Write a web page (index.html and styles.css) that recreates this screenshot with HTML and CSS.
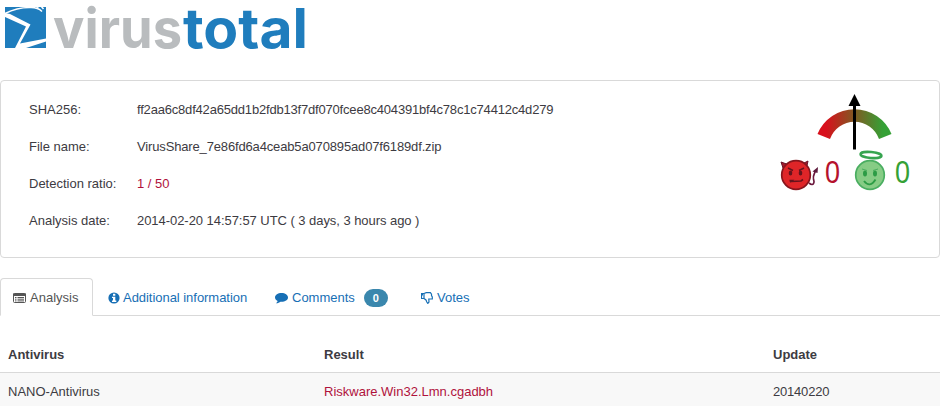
FILE: index.html
```html
<!DOCTYPE html>
<html lang="en">
<head>
<meta charset="utf-8">
<title>VirusTotal</title>
<link rel="stylesheet" href="styles.css">
</head>
<body>
<div class="page">
  <header class="header">
    <svg class="logo" width="310" height="60" viewBox="0 0 310 60" role="img" aria-label="virustotal">
      <rect x="5" y="7" width="41" height="41" fill="#1f7dbd"/>
      <path d="M5 13.500Q18 7 31 7.500Q38 7.500 42 11.500" fill="none" stroke="#fff" stroke-width="1.500"/>
      <path d="M35 6L38.500 7.500M41 6L43.500 9" stroke="#fff" stroke-width="1.500"/>
      <path d="M5 13L10 14L30.500 24.500L20 43.500L46 38.500V41.500L26 48H15L26 26.500L5 17Z" fill="#fff"/>
      <text class="word" x="53" y="48" textLength="129" lengthAdjust="spacingAndGlyphs" fill="#b9bcbe">virus</text>
      <text class="word" x="183" y="48" textLength="125" lengthAdjust="spacingAndGlyphs" fill="#1f7dbd">total</text>
    </svg>
  </header>
  <section class="summary">
    <dl class="facts">
      <dt>SHA256:</dt><dd><span class="hash">ff2aa6c8df42a65dd1b2fdb13f7df070fcee8c404391bf4c78c1c74412c4d279</span></dd>
      <dt>File name:</dt><dd><span class="file">VirusShare_7e86fd6a4ceab5a070895ad07f6189df.zip</span></dd>
      <dt>Detection ratio:</dt><dd class="red">1 / 50</dd>
      <dt>Analysis date:</dt><dd><span class="date">2014-02-20 14:57:57 UTC ( 3 days, 3 hours ago )</span></dd>
    </dl>
    <div class="rating">
      <svg width="140" height="104" viewBox="775 90 140 104">
        <defs><linearGradient id="scale" gradientUnits="userSpaceOnUse" x1="826" y1="0" x2="883" y2="0"><stop offset="0" stop-color="#d8101c"/><stop offset=".5" stop-color="#805a22"/><stop offset="1" stop-color="#35a136"/></linearGradient></defs>
        <path d="M817.500 134A40 40 0 0 1 891.500 134L879 139A26 26 0 0 0 830 139Z" fill="url(#scale)"/>
        <path d="M854.500 149.500V104" stroke="#000" stroke-width="3"/>
        <path d="M854.500 94L860.500 106H848.500Z"/>
        <path d="M783 168L781 162L788 164.500M801 164.500L808 161L806.500 168" fill="#a51b2b" stroke="#68142a"/>
        <circle cx="796" cy="175" r="14.300" fill="#df2528" stroke="#87151d" stroke-width="1.700"/>
        <path d="M788 168L793 170.500M799 170.500L804 168M789.500 180.500L792 180.500L790 182M791 181.500L801 181L803 179.500" fill="none" stroke="#65131c" stroke-width="1.600"/>
        <ellipse cx="790.500" cy="173" rx="1.800" ry="2.600" fill="#65131c"/><ellipse cx="800.500" cy="173" rx="1.800" ry="2.600" fill="#65131c"/>
        <path d="M809 183C814 187 814.500 182 813.500 179C812.500 175 815 174 815.500 170" fill="none" stroke="#6b173c" stroke-width="1.700"/>
        <path d="M818 167L812.500 171.500L817.500 173Z" fill="#5d193c"/>
        <text class="score" x="825" y="183" textLength="15" lengthAdjust="spacingAndGlyphs" fill="#b5122d">0</text>
        <circle cx="870" cy="175" r="14.300" fill="#86cc85" stroke="#4aae61" stroke-width="1.700"/>
        <ellipse cx="871" cy="155" rx="10.500" ry="3" fill="none" stroke="#36a44f" stroke-width="2.600" transform="rotate(5 871 155)"/>
        <path d="M862 169L867 170.500M873 170.500L878 169" fill="none" stroke="#4bae5f"/>
        <ellipse cx="865" cy="173.500" rx="2" ry="3" fill="#2c9c45"/><ellipse cx="875" cy="173.500" rx="2" ry="3" fill="#2c9c45"/>
        <path d="M864 181Q870 188.500 875.500 179.500" fill="none" stroke="#2c9c45" stroke-width="1.900"/>
        <text class="score" x="895" y="183" textLength="15" lengthAdjust="spacingAndGlyphs" fill="#35a136">0</text>
      </svg>
    </div>
  </section>
  <nav class="tabs">
    <a class="tab active"><svg class="icon" width="13" height="12" viewBox="0 0 13 12"><rect x=".5" y="1.500" width="12" height="9" rx="1" fill="#fff" stroke="currentColor"/><path d="M0 1.500H13V4H0Z" fill="currentColor"/><path d="M2 5.500H3.500M4.500 5.500H11M2 7.200H3.500M4.500 7.200H11M2 8.900H3.500M4.500 8.900H11" stroke="currentColor"/></svg><span>Analysis</span></a>
    <a class="tab info"><svg class="icon" width="12" height="12" viewBox="0 0 12 12"><circle cx="6" cy="6" r="5.600" fill="currentColor"/><path d="M5 1.700H7.300V3.700H5ZM4 4.700H7.300V8.600H8.300V10H4V8.600H5V6H4Z" fill="#fff"/></svg><span>Additional information</span></a>
    <a class="tab comments"><svg class="icon" width="13" height="12" viewBox="0 0 13 12"><path d="M6.500 1C2.900 1 0 2.900 0 5.500C0 7 1 8.200 2.600 9C2.400 10 1.700 10.800 1 11.300C3 11.200 4.500 10.500 5.500 9.700C9.700 10 13 8.300 13 5.500C13 2.900 10.100 1 6.500 1Z" fill="currentColor"/></svg><span>Comments</span><b class="badge">0</b></a>
    <a class="tab votes"><svg class="icon" width="12" height="12" viewBox="0 0 12 12"><path d="M.5 1.500H3V6.500H.5ZM3 1.500L5.200 .7H9.400L10.500 2.200V3.500L11.300 5V7H7.800L8 10L6.800 11.400L5.800 10L5 8L3 6.500" fill="none" stroke="currentColor" stroke-width="1.200"/><path d="M.5 1.500H2V3.500H.5Z" fill="currentColor"/></svg><span>Votes</span></a>
  </nav>
  <table class="results">
    <colgroup><col class="c1"><col class="c2"><col></colgroup>
    <thead><tr><th>Antivirus</th><th>Result</th><th>Update</th></tr></thead>
    <tbody><tr><td>NANO-Antivirus</td><td class="red">Riskware.Win32.Lmn.cgadbh</td><td class="update">20140220</td></tr></tbody>
  </table>
</div>
</body>
</html>
```
FILE: styles.css
```css
* { box-sizing: border-box; }
body { margin: 0; background: #fff; color: #3d3b42; font: 13px/18px "Liberation Sans", Arial, sans-serif; overflow: hidden; }
.page { width: 940px; }
.header { height: 80px; }
.logo { display: block; overflow: visible; }
.word { font: 700 55px/1 Inter, sans-serif; }
.summary { height: 178px; border: 1px solid #d9d9d9; border-radius: 4px; padding: 10px 24px 0 28px; display: flex; justify-content: space-between; }
.facts { margin: 0; display: grid; grid-template-columns: 108px auto; grid-auto-rows: 37px; line-height: 37px; white-space: nowrap; align-content: start; }
.facts dd { margin: 0; }
.hash { letter-spacing: -.19px; }
.file { letter-spacing: -.15px; }
.date { letter-spacing: -.05px; }
.red { color: #b0123c; }
.rating svg { display: block; margin-top: -1px; }
.score { font: 31px "Liberation Sans", Arial, sans-serif; }
.tabs { display: flex; height: 38px; margin-top: 20px; border-bottom: 1px solid #d9d9d9; color: #176fb5; }
.tab { display: flex; align-items: center; height: 37px; padding-top: 2px; white-space: nowrap; }
.tab.active { width: 93px; height: 38px; padding: 1px 0 0 12px; border: 1px solid #d9d9d9; border-bottom-color: #fff; border-radius: 4px 4px 0 0; color: #555; background: #fff; }
.icon { flex: none; margin-right: 4px; }
.info { width: 182px; padding-left: 15px; letter-spacing: -.04px; }
.info .icon { margin-right: 3px; }
.comments { width: 146px; }
.badge { width: 24px; height: 18px; margin-left: 9px; border-radius: 9px; background: #3a87ad; color: #fff; font-size: 11px; text-align: center; }
.results { width: 940px; margin-top: 20px; border-collapse: separate; border-spacing: 0; table-layout: fixed; }
.c1 { width: 316px; }
.c2 { width: 449px; }
.results th { height: 37px; padding: 1px 8px 0; text-align: left; border-bottom: 1px solid #d9d9d9; }
.results td { height: 37px; padding: 0 8px; background: #f8f8f8; }
.update { letter-spacing: -.2px; }
```
